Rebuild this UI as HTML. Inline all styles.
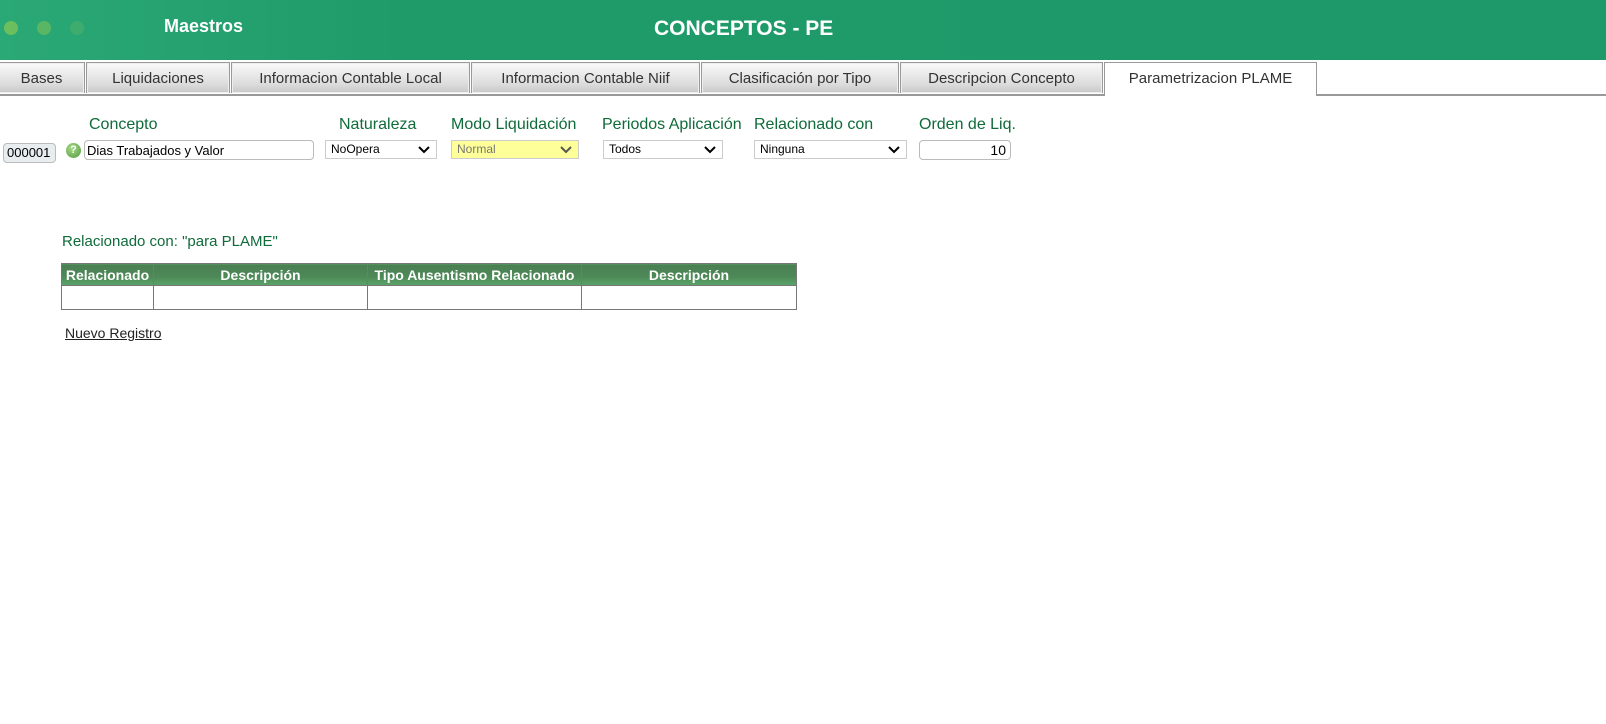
<!DOCTYPE html>
<html><head><meta charset="utf-8"><style>
body{margin:0;width:1606px;height:724px;background:#fff;font-family:"Liberation Sans",sans-serif;position:relative;overflow:hidden}
.hdr{position:absolute;left:0;top:0;width:1606px;height:60px;background:linear-gradient(90deg,#2aa875 0%,#1f9b6a 25%,#1e9a6a 100%)}
.dot{position:absolute;top:21px;width:14px;height:14px;border-radius:50%}
.t1{position:absolute;left:164px;top:16px;color:#fff;font-weight:bold;font-size:18px}
.t2{position:absolute;left:654px;top:17px;color:#fff;font-weight:bold;font-size:21px}
.tab{position:absolute;top:62px;height:31px;border:1px solid #999;border-bottom:none;background:linear-gradient(#fafafa,#dcdcdc 70%,#c8c8c8);color:#333;font-size:15px;text-align:center;line-height:31px;box-sizing:border-box;box-shadow:inset 0 0 0 1px #eee}
.tabline{position:absolute;left:0;top:94px;width:1606px;height:2px;background:#999}
.act{background:#fff;height:34px;border:1px solid #999;border-bottom:none;box-shadow:none;line-height:32px}
.lbl{position:absolute;top:116px;color:#0f6b3a;font-size:16px}
.sel{position:absolute;top:140px;height:19px;border:1px solid #ccc;box-sizing:border-box;font-size:12px;line-height:17px;padding-left:5px;color:#000}
.sel svg{position:absolute;right:6px;top:5px}
.inp{position:absolute;border:1px solid #bbb;border-radius:4px;box-sizing:border-box;font-size:13px}
table{position:absolute;left:61px;top:263px;border-collapse:collapse;font-family:"Liberation Sans Narrow","Liberation Sans",sans-serif}
th{background:linear-gradient(#4a7e52,#4e8a58 60%,#5aa56a);color:#fff;font-size:14px;height:21px;padding:0;border:1px solid #777}
td{height:21px;border:1px solid #777}
</style></head><body>
<div class="hdr">
<div class="dot" style="left:4px;background:#7cc458;opacity:.8"></div>
<div class="dot" style="left:37px;background:#6cbd5e;opacity:.7"></div>
<div class="dot" style="left:70px;background:#4bb06a;opacity:.6"></div>
<div class="t1">Maestros</div>
<div class="t2">CONCEPTOS - PE</div>
</div>
<div class="tabline"></div>
<div class="tab" style="left:-2px;width:87px">Bases</div>
<div class="tab" style="left:86px;width:144px">Liquidaciones</div>
<div class="tab" style="left:231px;width:239px">Informacion Contable Local</div>
<div class="tab" style="left:471px;width:229px">Informacion Contable Niif</div>
<div class="tab" style="left:701px;width:198px">Clasificación por Tipo</div>
<div class="tab" style="left:900px;width:203px">Descripcion Concepto</div>
<div class="tab act" style="left:1104px;width:213px">Parametrizacion PLAME</div>

<div class="lbl" style="left:89px">Concepto</div>
<div class="lbl" style="left:339px">Naturaleza</div>
<div class="lbl" style="left:451px">Modo Liquidación</div>
<div class="lbl" style="left:602px">Periodos Aplicación</div>
<div class="lbl" style="left:754px">Relacionado con</div>
<div class="lbl" style="left:919px">Orden de Liq.</div>

<div class="inp" style="left:3px;top:143px;width:53px;height:20px;background:#e8eef0;line-height:18px;padding-left:3px">000001</div>
<div style="position:absolute;left:66px;top:143px;width:15px;height:15px;border-radius:50%;background:radial-gradient(circle at 40% 35%,#a9d98a,#4f9a3a);color:#fff;font-size:11px;font-weight:bold;text-align:center;line-height:15px">?</div>
<div class="inp" style="left:84px;top:140px;width:230px;height:20px;line-height:19px;padding-left:2px">Dias Trabajados y Valor</div>

<div class="sel" style="left:325px;width:112px">NoOpera<svg width="12" height="8"><path d="M1 1l5 5 5-5" stroke="#000" stroke-width="2" fill="none"/></svg></div>
<div class="sel" style="left:451px;width:128px;background:#ffff99;color:#777">Normal<svg width="12" height="8"><path d="M1 1l5 5 5-5" stroke="#555" stroke-width="2" fill="none"/></svg></div>
<div class="sel" style="left:603px;width:120px">Todos<svg width="12" height="8"><path d="M1 1l5 5 5-5" stroke="#000" stroke-width="2" fill="none"/></svg></div>
<div class="sel" style="left:754px;width:153px">Ninguna<svg width="12" height="8"><path d="M1 1l5 5 5-5" stroke="#000" stroke-width="2" fill="none"/></svg></div>
<div class="inp" style="left:919px;top:140px;width:92px;height:20px;text-align:right;padding-right:4px;line-height:19px;font-size:14px">10</div>

<div style="position:absolute;left:62px;top:233px;color:#0f6b3a;font-size:15px">Relacionado con: "para PLAME"</div>
<table>
<tr><th style="width:91px">Relacionado</th><th style="width:213px">Descripción</th><th style="width:213px">Tipo Ausentismo Relacionado</th><th style="width:214px">Descripción</th></tr>
<tr><td></td><td></td><td></td><td></td></tr>
</table>
<div style="position:absolute;left:65px;top:325px;font-size:14px;color:#222;text-decoration:underline">Nuevo Registro</div>
</body></html>
